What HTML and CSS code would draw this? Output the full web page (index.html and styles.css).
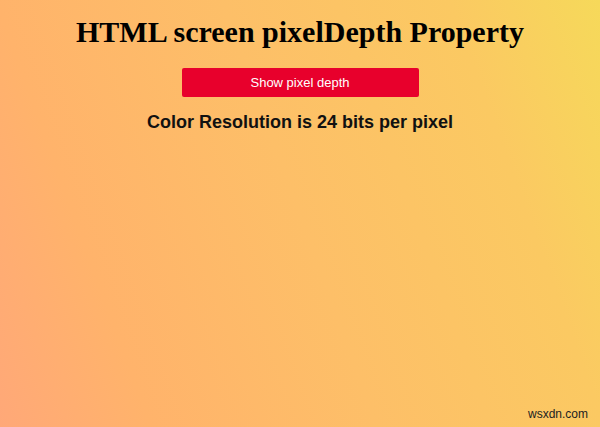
FILE: index.html
```html
<!DOCTYPE html>
<html>
<head>
<meta charset="utf-8">
<link rel="stylesheet" href="styles.css">
</head>
<body>
<main class="page">
  <h1 class="title">HTML screen pixelDepth Property</h1>
  <button class="btn">Show pixel depth</button>
  <p class="result">Color Resolution is 24 bits per pixel</p>
</main>
<span class="watermark">wsxdn.com</span>
</body>
</html>
```
FILE: styles.css
```css
html, body {
  margin: 0;
  height: 100%;
}
body {
  background: linear-gradient(70deg, #ffa878 0%, #ffb36b 20%, #fdbf68 50%, #fbc962 80%, #f6d95a 100%);
  position: relative;
  overflow: hidden;
}
.page {
  display: flex;
  flex-direction: column;
  align-items: center;
  padding-top: 14px;
}
.title {
  font-family: "Liberation Serif", serif;
  font-weight: bold;
  font-size: 30px;
  line-height: 36px;
  margin: 0;
  color: #000;
}
.btn {
  margin-top: 18px;
  width: 237px;
  height: 29px;
  background: #e8002c;
  color: #fff;
  border: none;
  border-radius: 2px;
  font-family: "Liberation Sans", sans-serif;
  font-size: 13px;
  padding: 0;
}
.result {
  margin: 14px 0 0;
  font-family: "Liberation Sans", sans-serif;
  font-weight: bold;
  font-size: 18px;
  line-height: 22px;
  color: #111;
}
.watermark {
  position: absolute;
  right: 12px;
  bottom: 6px;
  font-family: "Liberation Sans", sans-serif;
  font-size: 12px;
  color: #222;
}
```
